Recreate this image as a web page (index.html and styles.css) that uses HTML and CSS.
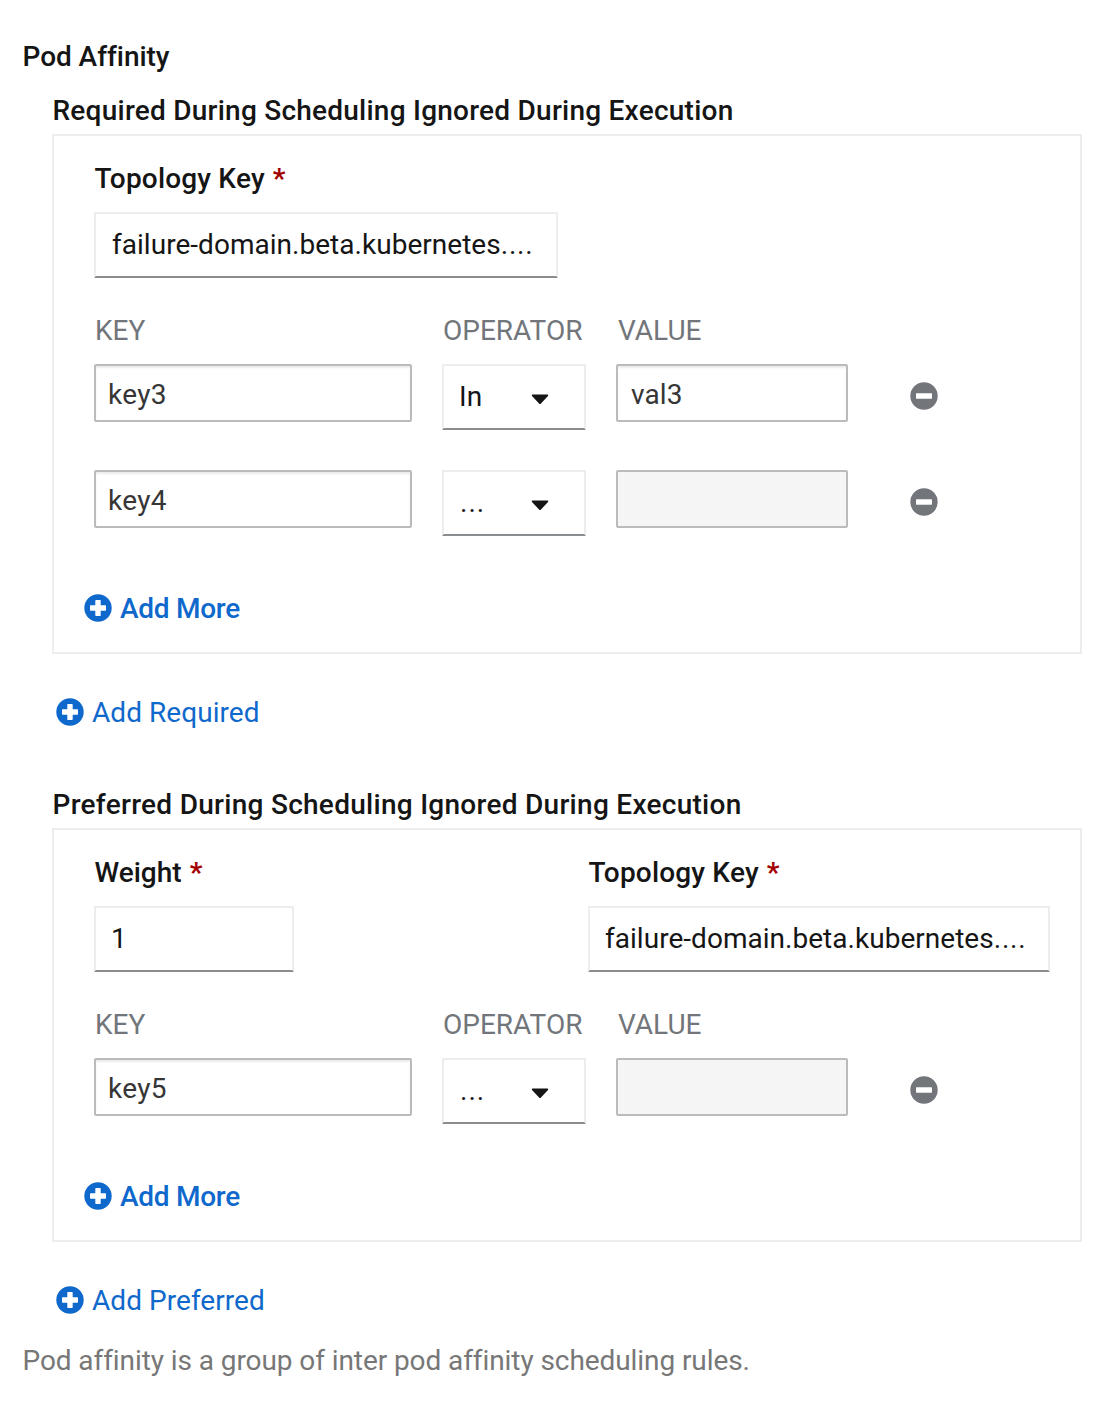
FILE: index.html
```
<!DOCTYPE html>
<html lang="en">
<head>
<meta charset="utf-8">
<title>Pod Affinity</title>
<link rel="stylesheet" href="styles.css">
</head>
<body>
<svg class="sprite" aria-hidden="true">
  <symbol id="plus" viewBox="0 0 28 28"><path fill="currentColor" fill-rule="evenodd" d="M14 .3a13.7 13.7 0 1 0 0 27.4A13.7 13.7 0 0 0 14 .3zM11.3 6.7q0-.7.7-.7h4q.7 0 .7.7v4.6h4.6q.7 0 .7.7v4q0 .7-.7.7h-4.6v4.6q0 .7-.7.7h-4q-.7 0-.7-.7v-4.6H6.7q-.7 0-.7-.7v-4q0-.7.7-.7h4.6z"/></symbol>
  <symbol id="minus" viewBox="0 0 28 28"><path fill="currentColor" fill-rule="evenodd" d="M14 .3a13.7 13.7 0 1 0 0 27.4A13.7 13.7 0 0 0 14 .3zM6.7 11.3h14.6q.7 0 .7.7v4q0 .7-.7.7H6.7q-.7 0-.7-.7v-4q0-.7.7-.7z"/></symbol>
  <symbol id="caret" viewBox="0 0 18 11"><path fill="currentColor" d="M1.500.5h15q1.300.3.500 1.500L10 9.500q-1 1-2 0L1 2Q.2.800 1.500.5z"/></symbol>
</svg>
<main class="page">
  <h1 class="title">Pod Affinity</h1>

  <section class="group">
    <h2 class="heading">Required During Scheduling Ignored During Execution</h2>
    <div class="card">
      <div class="fields">
        <div class="field">
          <div class="label"><span class="topology">Topology Key</span><span class="star">*</span></div>
          <div class="select select-topology first"><span>failure-domain.beta.kubernetes<span class="dots">....</span></span></div>
        </div>
      </div>
      <div class="row head"><span>KEY</span><span>OPERATOR</span><span class="value">VALUE</span></div>
      <div class="row">
        <div class="input"><span>key3</span></div>
        <div class="select op"><span>In</span><svg class="caret"><use href="#caret"/></svg></div>
        <div class="input value-input"><span>val3</span></div>
        <svg class="icon remove"><use href="#minus"/></svg>
      </div>
      <div class="row">
        <div class="input"><span>key4</span></div>
        <div class="select op"><span class="dots unset">...</span><svg class="caret"><use href="#caret"/></svg></div>
        <div class="input disabled"></div>
        <svg class="icon remove"><use href="#minus"/></svg>
      </div>
      <div class="link more"><svg class="icon"><use href="#plus"/></svg><span>Add More</span></div>
    </div>
    <div class="link add"><svg class="icon"><use href="#plus"/></svg><span>Add Required</span></div>
  </section>

  <section class="group">
    <h2 class="heading preferred">Preferred During Scheduling Ignored During Execution</h2>
    <div class="card">
      <div class="fields">
        <div class="field weight">
          <div class="label"><span>Weight</span><span class="star">*</span></div>
          <div class="select select-weight"><span>1</span></div>
        </div>
        <div class="field">
          <div class="label"><span class="topology">Topology Key</span><span class="star">*</span></div>
          <div class="select select-topology"><span>failure-domain.beta.kubernetes<span class="dots">....</span></span></div>
        </div>
      </div>
      <div class="row head"><span>KEY</span><span>OPERATOR</span><span class="value">VALUE</span></div>
      <div class="row">
        <div class="input"><span>key5</span></div>
        <div class="select op"><span class="dots unset">...</span><svg class="caret"><use href="#caret"/></svg></div>
        <div class="input disabled"></div>
        <svg class="icon remove"><use href="#minus"/></svg>
      </div>
      <div class="link more"><svg class="icon"><use href="#plus"/></svg><span>Add More</span></div>
    </div>
    <div class="link add"><svg class="icon"><use href="#plus"/></svg><span>Add Preferred</span></div>
  </section>

  <p class="help">Pod affinity is a group of inter pod affinity scheduling rules.</p>
</main>
</body>
</html>
```
FILE: styles.css
```
* { box-sizing: border-box; }
body {
  margin: 0;
  background: #fff;
  color: #151515;
  font: 400 28px/34px Roboto, "Liberation Sans", sans-serif;
  font-variant-ligatures: none;
  white-space: nowrap;
}
.sprite { display: none; }
.page { padding: 40px 30px 0 22px; }
.title, .heading { margin: 0; font-size: 28px; font-weight: 500; line-height: 34px; }
.title { margin-bottom: 20px; padding-left: 0.5px; letter-spacing: -.05px; }
.heading { padding-left: 0.5px; letter-spacing: .24px; }
.heading.preferred { letter-spacing: .28px; }
.group { padding-left: 30px; }
.card {
  margin-top: 6px;
  padding: 26px 30px 30px 40px;
  border: 2px solid #ededed;
}
.fields { display: flex; }
.weight { width: 494px; }
.label { display: flex; gap: 8px; padding-left: 0.5px; font-weight: 500; }
.topology { letter-spacing: .18px; }
.star { color: #a30000; font-weight: 700; }
.select {
  display: flex;
  align-items: center;
  height: 66px;
  padding: 0 15px;
  border: 2px solid #ededed;
  border-bottom-color: #8a8d90;
  letter-spacing: .03px;
}
.field .select { margin-top: 16px; }
.select-topology { width: 462px; }
.select-topology.first { width: 464px; padding-left: 16px; }
.select-weight { width: 200px; }
.dots { letter-spacing: .8px; }
.unset { padding-left: 1px; letter-spacing: 1px; }
.row {
  display: grid;
  grid-template-columns: 318px 144px 232px 60px;
  column-gap: 30px;
  align-items: start;
  height: 66px;
  margin-bottom: 40px;
}
.row.head { height: 34px; margin: 36px 0 16px; padding-left: 1px; color: #72767b; }
.value { padding-left: 1px; }
.op { justify-content: space-between; padding-right: 35px; }
.caret { width: 18px; height: 11px; margin-top: 5px; }
.input {
  display: flex;
  align-items: center;
  height: 58px;
  padding: 4px 12px 0;
  border: 2px solid #bbb;
  border-radius: 2px;
  color: #363636;
  letter-spacing: .3px;
  box-shadow: inset 0 2px 2px rgba(3, 3, 3, .075);
}
.value-input { padding-left: 13px; letter-spacing: .1px; }
.disabled { background: #f5f5f5; box-shadow: none; }
.icon { width: 28px; height: 28px; flex: none; }
.remove { margin: 18px 0 0 32px; color: #72767b; }
.link { display: flex; align-items: center; gap: 8px; height: 28px; color: #0f69cc; }
.link span { padding-top: 2px; }
.more { margin: 58px 0 0 -10px; font-weight: 500; letter-spacing: -.28px; }
.add { margin: 44px 0 62px 4px; letter-spacing: .05px; }
.help { margin: -32px 0 0; padding-left: 0.5px; color: #777; letter-spacing: -.08px; }
```
